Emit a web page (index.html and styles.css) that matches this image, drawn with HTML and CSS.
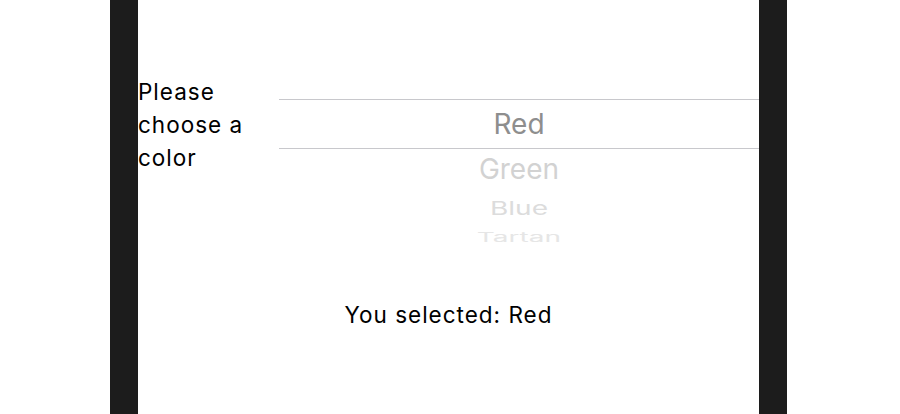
FILE: index.html
```html
<!DOCTYPE html>
<html>
<head>
<meta charset="utf-8">
<link rel="stylesheet" href="styles.css">
</head>
<body>
<div class="frame">
  <div class="screen">
    <div class="row">
      <div class="label">Please choose a color</div>
      <div class="picker">
        <div class="band"><span class="item sel">Red</span></div>
        <div class="item i1">Green</div>
        <div class="item i2">Blue</div>
        <div class="item i3">Tartan</div>
      </div>
    </div>
    <div class="result">You selected: Red</div>
  </div>
</div>
</body>
</html>
```
FILE: styles.css
```css
html, body {
  margin: 0;
  padding: 0;
  background: #ffffff;
}
body {
  font-family: Inter, "Liberation Sans", sans-serif;
  color: #000;
}
.frame {
  margin-left: 110px;
  width: 677px;
  height: 414px;
  box-sizing: border-box;
  padding: 0 28px;
  background: #1c1c1c;
}
.screen {
  background: #ffffff;
  height: 100%;
  display: flex;
  flex-direction: column;
}
.row {
  display: flex;
}
.label {
  width: 141px;
  margin-top: 75px;
  font-size: 22.5px;
  line-height: 33px;
  letter-spacing: 1px;
}
.picker {
  width: 480px;
  height: 243px;
  overflow: hidden;
  padding-top: 99px;
  box-sizing: border-box;
  display: flex;
  flex-direction: column;
  align-items: stretch;
}
.band {
  height: 50px;
  box-sizing: border-box;
  border-top: 1px solid #c8c8cc;
  border-bottom: 1px solid #c8c8cc;
  display: flex;
  align-items: center;
  justify-content: center;
}
.item {
  font-size: 28px;
  text-align: center;
  display: block;
}
.sel {
  color: #8e8e8e;
  line-height: 48px;
}
.i1 {
  color: #d2d2d2;
  height: 41px;
  line-height: 41px;
}
.i2 {
  color: #dcdcdc;
  height: 36px;
  line-height: 36px;
  transform: scaleY(0.66);
}
.i3 {
  color: #e6e6e6;
  height: 22px;
  line-height: 22px;
  transform: scaleY(0.46);
}
.result {
  margin-top: 55px;
  text-align: center;
  font-size: 22.5px;
  line-height: 33px;
  letter-spacing: 1px;
}
```
